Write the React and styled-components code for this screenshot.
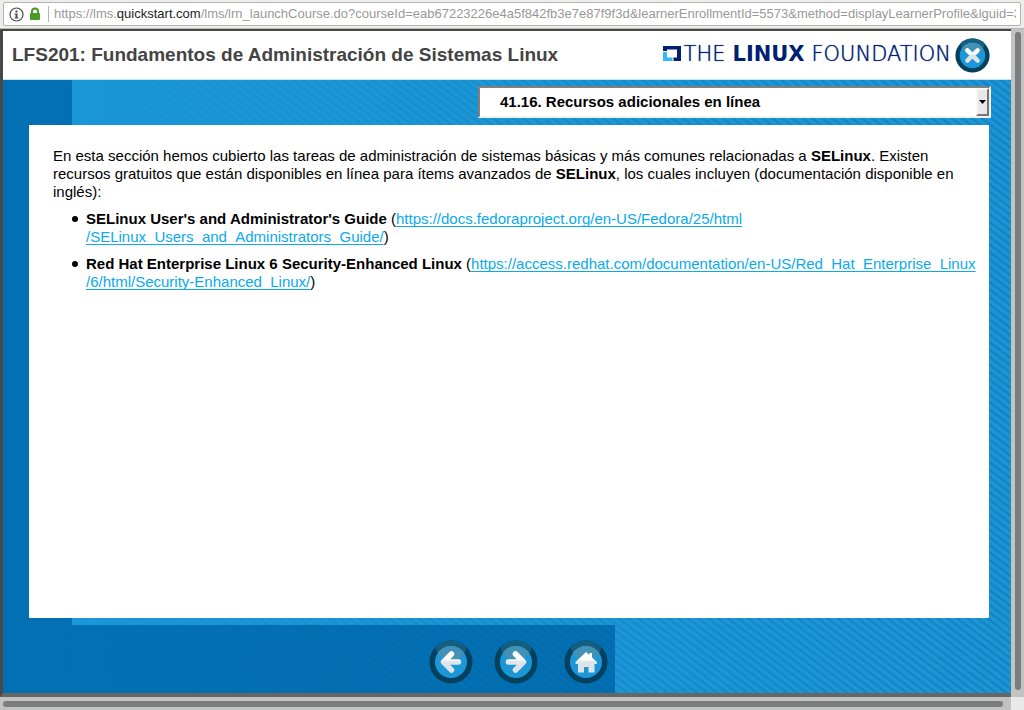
import React from "react";
import styled, { createGlobalStyle } from "styled-components";

const GlobalStyle = createGlobalStyle`
  *, *::before, *::after { box-sizing: border-box; }
  body {
    margin: 0;
    font-family: "Liberation Sans", Arial, sans-serif;
    font-size: 15px;
    color: #000;
  }
`;

const Window = styled.div`
  display: flex;
  flex-direction: column;
  height: 100vh;
  min-height: 400px;
  background: #f0f0ee;
`;

const Toolbar = styled.div`
  flex: none;
  height: 29px;
  padding: 2px 3px 3px;
  background: #ededeb;
  border-bottom: 1px solid #b9b9b6;
`;

const AddressBar = styled.div`
  display: flex;
  align-items: center;
  height: 24px;
  padding: 0 4px 0 5px;
  background: #fff;
  border: 1px solid #b2b4b0;
  border-radius: 2px;
`;

const Divider = styled.span`
  flex: none;
  width: 1px;
  height: 16px;
  margin: 0 5px 0 7px;
  background: #b5b5b5;
`;

const Url = styled.span`
  flex: 1;
  min-width: 0;
  overflow: hidden;
  white-space: nowrap;
  font-size: 13px;
  line-height: 22px;
  color: #999;
  b { font-weight: 400; color: #222; }
`;

const LockIcon = styled.svg`
  flex: none;
  margin-left: 5px;
`;

const Viewport = styled.div`
  flex: 1;
  min-height: 0;
  display: grid;
  grid-template-columns: minmax(0, 1fr) 13px;
  grid-template-rows: minmax(0, 1fr) 13px;
`;

const Track = styled.div`
  padding: ${(p) => (p.$vertical ? "3px 3px 7px 4px" : "4px 8px 3px 3px")};
  background: #c1c2c1;
`;

const Thumb = styled.div`
  height: 100%;
  border-radius: 3px;
  background: #797d7d;
`;

const Corner = styled.div`
  background: #e9e9e7;
`;

const Page = styled.div`
  display: flex;
  flex-direction: column;
  min-width: 0;
  border: solid #484848;
  border-width: 2px 0 0 3px;
  border-bottom: 4px solid #666;
`;

const Header = styled.header`
  flex: none;
  display: flex;
  align-items: center;
  justify-content: space-between;
  height: 49px;
  padding: 0 21px 0 9px;
  background: #fff;
  border-bottom: 1px solid #c5e2f3;
`;

const Title = styled.h1`
  margin: 0;
  font-size: 19px;
  line-height: 24px;
  color: #444;
  white-space: nowrap;
`;

const Brand = styled.div`
  display: flex;
  align-items: center;
  gap: 4px;
`;

const Logo = styled.div`
  display: flex;
  align-items: center;
  gap: 3px;
  padding-bottom: 3px;
`;

const Wordmark = styled.span`
  display: flex;
  align-items: baseline;
  gap: 7px;
  font-family: "DejaVu Sans", sans-serif;
  font-weight: 200;
  font-size: 21px;
  line-height: 24px;
  color: #002072;
  text-shadow: 0 0 1px #002072;
  white-space: nowrap;
  strong { font-weight: 700; text-shadow: none; }
`;

const Stage = styled.main`
  flex: 1;
  min-height: 0;
  display: flex;
  flex-direction: column;
  position: relative;
  isolation: isolate;
  background:
    linear-gradient(#0370b3, #0370b3) left top / 69px 100% no-repeat,
    linear-gradient(#0370b3, #0370b3) left bottom / 612px 68px no-repeat,
    #1b96d6;
  &::before {
    content: "";
    position: absolute;
    inset: 0;
    z-index: -1;
    background: repeating-linear-gradient(
      37deg,
      transparent 0 2px,
      rgba(10, 80, 135, 0.3) 4px,
      transparent 6px
    );
    mask-image: linear-gradient(90deg, transparent 5%, rgba(0, 0, 0, 0.4) 40%, #000);
  }
`;

const LessonBar = styled.div`
  display: flex;
  justify-content: flex-end;
  padding: 6px 20px 7px;
`;

const LessonField = styled.div`
  position: relative;
  width: 53%;
`;

const LessonSelect = styled.select`
  display: block;
  appearance: none;
  width: 100%;
  height: 32px;
  padding: 0 24px 0 20px;
  border: 2px solid;
  border-color: #808080 #f4f2ee #f4f2ee #808080;
  border-radius: 0;
  background: #fff;
  font: 700 15px/20px "Liberation Sans", Arial, sans-serif;
  color: #000;
`;

const SelectArrow = styled.span`
  position: absolute;
  top: 2px;
  right: 2px;
  bottom: 2px;
  width: 13px;
  display: grid;
  place-items: center;
  background: #e8e8e8;
  border: 2px solid;
  border-color: #f6f6f6 #777 #777 #f6f6f6;
  pointer-events: none;
`;

const Panel = styled.article`
  flex: 1;
  min-height: 0;
  overflow: auto;
  margin: 0 22px 0 26px;
  padding: 22px 8px 22px 24px;
  background: #fff;
  border-radius: 1px;
  line-height: 18px;
`;

const Intro = styled.p`
  margin: 0 0 9px;
`;

const Resources = styled.ul`
  margin: 0;
  padding: 0 0 0 33px;
  list-style: none;
`;

const Resource = styled.li`
  margin-bottom: 9px;
  &::before {
    content: "";
    display: inline-block;
    width: 6px;
    height: 6px;
    margin: 0 8px 0 -14px;
    vertical-align: 2px;
    border-radius: 50%;
    background: #000;
  }
`;

const ResourceLink = styled.a`
  color: #0aaaec;
  text-decoration: underline;
  text-decoration-skip-ink: none;
  text-underline-offset: 2px;
`;

const Footer = styled.nav`
  flex: none;
  display: flex;
  justify-content: center;
  gap: 21px;
  height: 75px;
  padding: 22px 0 0 22px;
`;

const RoundButton = styled.button`
  flex: none;
  display: block;
  width: ${(p) => p.$size}px;
  height: ${(p) => p.$size}px;
  padding: 0;
  border: 0;
  border-radius: 50%;
  background: none;
  cursor: pointer;
  svg { display: block; width: 100%; height: 100%; }
  &:last-child { margin-left: ${(p) => (p.$apart ? "5px" : "0")}; }
`;

function Orb({ id, children }) {
  return (
    <svg viewBox="0 0 44 44" aria-hidden="true">
      <defs>
        <clipPath id={id + "-rim"}><circle cx="22" cy="22" r="21.5" /></clipPath>
        <clipPath id={id + "-face"}><circle cx="22" cy="22" r="16" /></clipPath>
        <linearGradient id={id + "-ink"} gradientUnits="userSpaceOnUse" x1="0" y1="19" x2="0" y2="22">
          <stop offset="0" stopColor="#fff" />
          <stop offset="1" stopColor="#dfe4e8" />
        </linearGradient>
      </defs>
      <circle cx="22" cy="22" r="21.5" fill="#03415f" />
      <circle cx="22" cy="5" r="15.5" fill="#145f80" clipPath={`url(#${id}-rim)`} />
      <circle cx="22" cy="22" r="16" fill="#1b97d8" />
      <circle cx="22" cy="5" r="15.5" fill="#4392b6" clipPath={`url(#${id}-face)`} />
      {children}
    </svg>
  );
}

function Arrow({ id, flip }) {
  return (
    <g transform={flip ? "translate(44 0) scale(-1 1)" : undefined}>
      <path
        d="M22.500 14L14.500 22L22.500 30M15 22H29.500"
        fill="none"
        stroke={`url(#${id}-ink)`}
        strokeWidth="5.500"
        strokeLinecap="round"
        strokeLinejoin="round"
      />
    </g>
  );
}

const lessons = ["41.16. Recursos adicionales en línea"];

export default function App() {
  return (
    <Window>
      <GlobalStyle />
      <Toolbar>
        <AddressBar>
          <svg width="15" height="15" viewBox="0 0 15 15" aria-hidden="true">
            <circle cx="7.500" cy="7.500" r="6.500" fill="none" stroke="#4a4a4a" strokeWidth="1.200" />
            <path d="M6.500 3.500h2v2h-2zM5.500 6.500h3v4h1v1h-4v-1h1v-3h-1z" fill="#4a4a4a" />
          </svg>
          <LockIcon width="12" height="14" viewBox="0 0 12 14" aria-hidden="true">
            <path d="M3 7V4.500a3 3 0 0 1 6 0V7" fill="none" stroke="#4a9a26" strokeWidth="2" />
            <rect x="1" y="6" width="10" height="7" rx="1" fill="#4a9a26" />
          </LockIcon>
          <Divider />
          <Url>
            https://lms.<b>quickstart.com</b>/lms/lrn_launchCourse.do?courseId=eab67223226e4a5f842fb3e7e87f9f3d&amp;learnerEnrollmentId=5573&amp;method=displayLearnerProfile&amp;lguid=3
          </Url>
        </AddressBar>
      </Toolbar>
      <Viewport>
        <Page>
          <Header>
            <Title>LFS201: Fundamentos de Administración de Sistemas Linux</Title>
            <Brand>
              <Logo>
                <svg width="18" height="15" viewBox="0 0 18 15" aria-hidden="true">
                  <path d="M0 5V0H18V15H10.500V11.500H14V3.500H4V5Z" fill="#002072" />
                  <path d="M0 6H4V11.500H9.500V15H0Z" fill="#35b7f5" />
                </svg>
                <Wordmark>
                  <span>THE</span><strong>LINUX</strong><span>FOUNDATION</span>
                </Wordmark>
              </Logo>
              <RoundButton type="button" $size={35} aria-label="Cerrar">
                <Orb id="close">
                  <path d="M15.500 15.500L28.500 28.500M28.500 15.500L15.500 28.500" stroke="url(#close-ink)" strokeWidth="5.500" strokeLinecap="round" />
                </Orb>
              </RoundButton>
            </Brand>
          </Header>
          <Stage>
            <LessonBar>
              <LessonField>
                <LessonSelect aria-label="Lección">
                  {lessons.map((l) => <option key={l}>{l}</option>)}
                </LessonSelect>
                <SelectArrow>
                  <svg width="7" height="4" viewBox="0 0 7 4" aria-hidden="true"><path d="M0 0H7L3.500 4Z" /></svg>
                </SelectArrow>
              </LessonField>
            </LessonBar>
            <Panel>
              <Intro>
                En esta sección hemos cubierto las tareas de administración de sistemas básicas y más comunes relacionadas a <b>SELinux</b>. Existen recursos gratuitos que están disponibles en línea para ítems avanzados de <b>SELinux</b>, los cuales incluyen (documentación disponible en inglés):
              </Intro>
              <Resources>
                <Resource>
                  <b>SELinux User's and Administrator's Guide</b> (<ResourceLink href="https://docs.fedoraproject.org/en-US/Fedora/25/html/SELinux_Users_and_Administrators_Guide/">https://docs.fedoraproject.org/en-US/Fedora/25/html<wbr />/SELinux_Users_and_Administrators_Guide/</ResourceLink>)
                </Resource>
                <Resource>
                  <b>Red Hat Enterprise Linux 6 Security-Enhanced Linux</b> (<ResourceLink href="https://access.redhat.com/documentation/en-US/Red_Hat_Enterprise_Linux/6/html/Security-Enhanced_Linux/">https://access.redhat.com/documentation/en-US/Red_Hat_Enterprise_Linux<wbr />/6/html/Security-Enhanced_Linux/</ResourceLink>)
                </Resource>
              </Resources>
            </Panel>
            <Footer aria-label="Navegación">
              <RoundButton type="button" $size={44} aria-label="Anterior">
                <Orb id="prev"><Arrow id="prev" /></Orb>
              </RoundButton>
              <RoundButton type="button" $size={44} aria-label="Siguiente">
                <Orb id="next"><Arrow id="next" flip /></Orb>
              </RoundButton>
              <RoundButton type="button" $size={44} $apart aria-label="Inicio">
                <Orb id="home">
                  <path d="M22 12L25.500 15V13H28V17.500L33 22V24H30.500V32.500H24.500V27H20V32.500H14V24H11.500V22Z" fill="url(#home-ink)" />
                </Orb>
              </RoundButton>
            </Footer>
          </Stage>
        </Page>
        <Track $vertical><Thumb /></Track>
        <Track><Thumb /></Track>
        <Corner />
      </Viewport>
    </Window>
  );
}
